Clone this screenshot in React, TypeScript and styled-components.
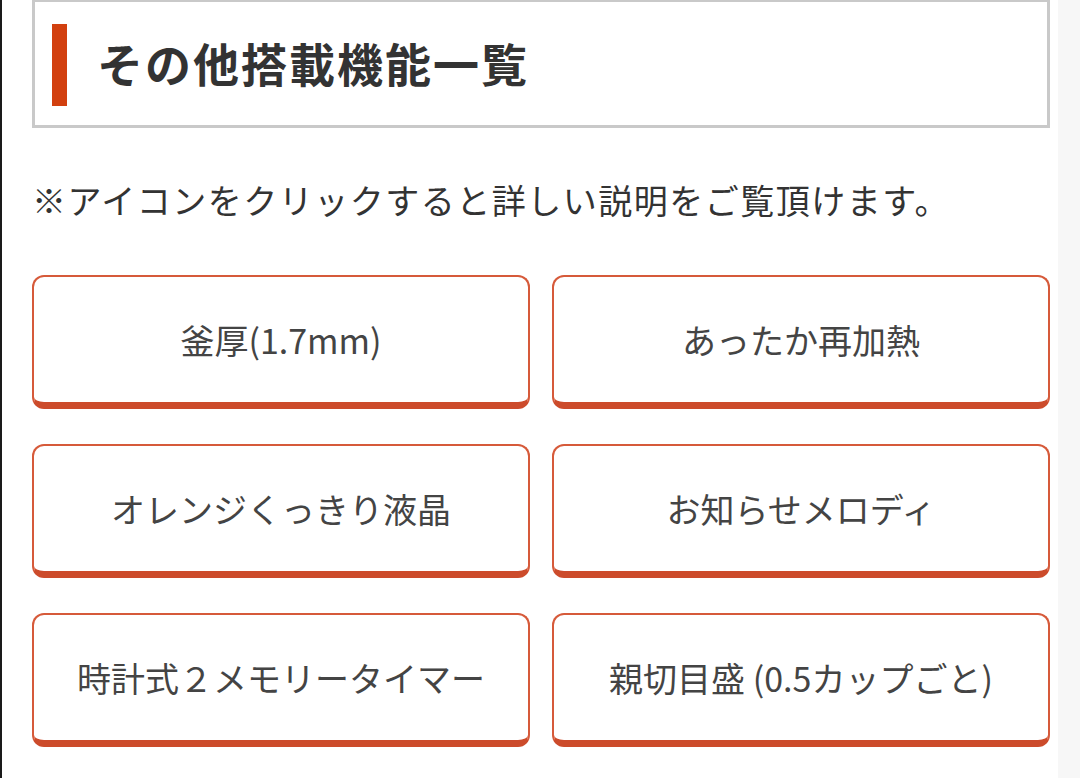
import React from "react"
import styled, { createGlobalStyle } from "styled-components"

const GlobalStyle = createGlobalStyle`
  html, body {
    margin: 0;
    padding: 0;
    background: #ffffff;
  }
  body {
    font-family: "Noto Sans CJK JP", "Noto Sans", sans-serif;
  }
`

const Page = styled.div`
  display: flex;
  width: 1080px;
  height: 778px;
  overflow: hidden;
  border-left: 2px solid #1a1a1a;
  box-sizing: border-box;
`

const Main = styled.main`
  flex: 1;
  padding: 0 8px 0 30px;
`

const ScrollStrip = styled.div`
  flex: none;
  width: 22px;
  background: #f7f7f7;
`

const HeadingBox = styled.div`
  display: flex;
  align-items: center;
  height: 128px;
  box-sizing: border-box;
  border: 3px solid #c9c9c9;
  border-top-width: 2px;
  padding-left: 17px;
`

const Bar = styled.span`
  flex: none;
  width: 15px;
  height: 82px;
  background: #d2400f;
  margin-right: 30px;
  margin-top: 2px;
`

const Heading = styled.h2`
  margin: 0;
  font-size: 46px;
  font-weight: 700;
  color: #333333;
  letter-spacing: 2px;
  margin-top: -4px;
`

const Note = styled.p`
  margin: 48px 0 0;
  font-size: 34px;
  line-height: 48px;
  color: #333333;
  letter-spacing: 1.5px;
`

const Grid = styled.div`
  display: grid;
  grid-template-columns: 1fr 1fr;
  column-gap: 22px;
  row-gap: 35px;
  margin-top: 51px;
`

const FeatureButton = styled.a`
  display: flex;
  align-items: center;
  justify-content: center;
  height: 134px;
  box-sizing: border-box;
  border: 2px solid #d65a3a;
  border-bottom: 7px solid #cc4b2b;
  border-radius: 12px;
  font-size: 34px;
  color: #444444;
  text-decoration: none;
  cursor: pointer;
`

const features = [
  "釜厚(1.7mm)",
  "あったか再加熱",
  "オレンジくっきり液晶",
  "お知らせメロディ",
  "時計式２メモリータイマー",
  "親切目盛 (0.5カップごと)",
]

export default function App() {
  return (
    <>
      <GlobalStyle />
      <Page>
        <Main>
          <HeadingBox>
            <Bar />
            <Heading>その他搭載機能一覧</Heading>
          </HeadingBox>
          <Note>※アイコンをクリックすると詳しい説明をご覧頂けます。</Note>
          <Grid>
            {features.map((f) => (
              <FeatureButton key={f}>{f}</FeatureButton>
            ))}
          </Grid>
        </Main>
        <ScrollStrip />
      </Page>
    </>
  )
}
